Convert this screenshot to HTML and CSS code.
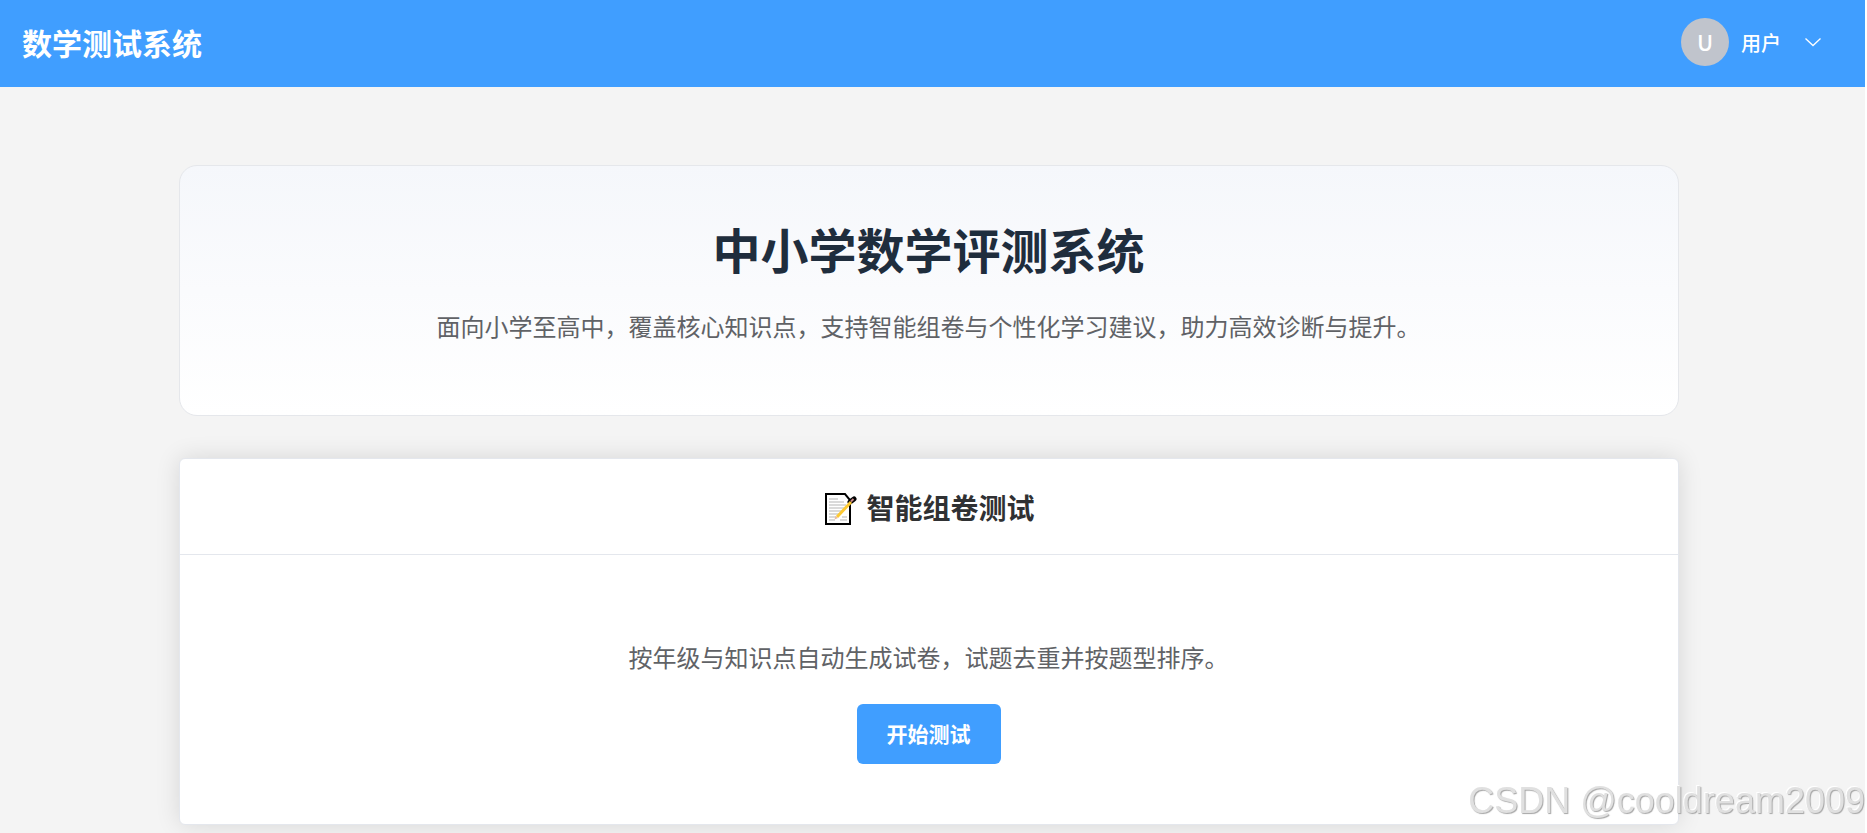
FILE: index.html
```html
<!DOCTYPE html>
<html lang="zh-CN">

<head>
    <meta charset="UTF-8">
    <meta name="viewport" content="width=device-width, initial-scale=1.0">
    <title>数学测试系统</title>
    <link rel="stylesheet" href="styles.css">
</head>

<body>
    <header class="navbar">
        <a class="logo" href="#">数学测试系统</a>
        <button class="user-menu" type="button">
            <span class="avatar">U</span>
            <span class="user-name">用户</span>
            <svg class="arrow" viewBox="0 0 20 20" aria-hidden="true">
                <path d="M2.500 6.500l7.500 7 7.500-7" />
            </svg>
        </button>
    </header>

    <main class="page">
        <div class="container">
            <section class="hero">
                <h1>中小学数学评测系统</h1>
                <p>面向小学至高中，覆盖核心知识点，支持智能组卷与个性化学习建议，助力高效诊断与提升。</p>
            </section>

            <section class="card">
                <div class="card-header">
                    <svg class="memo" viewBox="0 0 32 32" aria-hidden="true">
                        <path class="paper" d="M1 1h19l5 6v24H1z" />
                        <path class="lines" d="M4 6h9M4 9h15M4 12h17M4 15h15M4 18h13M4 21h10M4 24h7M4 27h6M17 24h5M15 27h7" />
                        <path class="pencil-edge" d="M25 9l4-3" />
                        <path class="pencil" d="M12 24L26 9" />
                        <path class="eraser" d="M26 8.500l2.500-2.500" />
                        <path class="tip" d="M9.500 26.500l1-3.500 2.500 2z" />
                    </svg>
                    <h2>智能组卷测试</h2>
                </div>
                <div class="card-body">
                    <p>按年级与知识点自动生成试卷，试题去重并按题型排序。</p>
                    <button class="start-btn" type="button">开始测试</button>
                </div>
            </section>
        </div>
    </main>

    <div class="watermark">CSDN @cooldream2009</div>
</body>

</html>
```

FILE: styles.css
```css
* {
    margin: 0;
    padding: 0;
    box-sizing: border-box;
}

:root {
    --primary-color: #409eff;
    --border-color: #e4e7ed;
    --text-color: #606266;
}

html {
    background-color: #fff;
}

body {
    min-height: 100vh;
    margin-right: 2px;
    background-color: #f4f4f4;
    color: var(--text-color);
    font-family: "Noto Sans CJK SC", "Noto Sans", sans-serif;
    overflow: hidden;
}

button {
    border: none;
    font-family: inherit;
    color: #fff;
    cursor: pointer;
}

/* Navbar */
.navbar {
    display: flex;
    justify-content: space-between;
    align-items: center;
    height: 87px;
    padding: 0 42px 3px 22px;
    background-color: var(--primary-color);
}

.logo {
    color: #fff;
    font-size: 30px;
    font-weight: bold;
    text-decoration: none;
}

.user-menu {
    display: flex;
    align-items: center;
    background: none;
    font-size: 20px;
    font-weight: 500;
}

.avatar {
    width: 48px;
    height: 48px;
    margin-right: 12px;
    border-radius: 50%;
    background-color: #c0c4cc;
    font-size: 22px;
    line-height: 46px;
}

.arrow {
    width: 20px;
    height: 20px;
    margin-left: 22px;
    fill: none;
    stroke: #fff;
    stroke-width: 1.3;
}

/* Main content */
.page {
    padding: 78px 8px 0 0;
}

.container {
    max-width: 1500px;
    margin: 0 auto;
}

.hero {
    padding: 44px 36px 69px;
    border: 1px solid #e5e7eb;
    border-radius: 18px;
    background: linear-gradient(180deg, #f5f7fb 0%, #fff 100%);
    text-align: center;
}

.hero h1 {
    margin-bottom: 20px;
    color: #1f2d3d;
    font-size: 48px;
    line-height: 76px;
}

.hero p,
.card-body p {
    font-size: 24px;
    line-height: 40px;
}

.card {
    margin-top: 42px;
    border: 1px solid var(--border-color);
    border-radius: 6px;
    background-color: #fff;
    box-shadow: 0 0 24px rgba(0, 0, 0, 0.12);
}

.card-header {
    display: flex;
    justify-content: center;
    align-items: center;
    gap: 9px;
    padding: 26px 30px 25px;
    border-bottom: 1px solid var(--border-color);
}

.card-header h2 {
    color: #303133;
    font-size: 28px;
    line-height: 44px;
}

.memo {
    width: 32px;
    height: 32px;
    margin: 4px 0 0 3px;
}

.card-body {
    padding: 82px 30px 60px;
    text-align: center;
}

.start-btn {
    height: 60px;
    margin-top: 27px;
    padding: 0 30px 2px;
    border-radius: 6px;
    background-color: var(--primary-color);
    font-size: 21px;
    font-weight: bold;
}

/* Memo icon */
.memo path {
    fill: none;
}

.memo .paper {
    fill: #fff;
    stroke: #000;
    stroke-width: 2;
}

.memo .lines {
    stroke: #b5b5b5;
}

.memo .pencil-edge {
    stroke: #000;
    stroke-width: 5;
    stroke-linecap: round;
}

.memo .pencil {
    stroke: #fcc934;
    stroke-width: 3;
}

.memo .eraser {
    stroke: #c98a8a;
    stroke-width: 2;
}

.memo .tip {
    fill: #e8b9a0;
}

/* Watermark */
.watermark {
    position: fixed;
    right: 2px;
    bottom: 11px;
    color: #e0e0e0;
    font-family: "Liberation Sans", Arial, sans-serif;
    font-size: 36px;
    text-shadow: 1px 1px 1px #a5a5a5, -1px -1px 0 #fff;
}
```
